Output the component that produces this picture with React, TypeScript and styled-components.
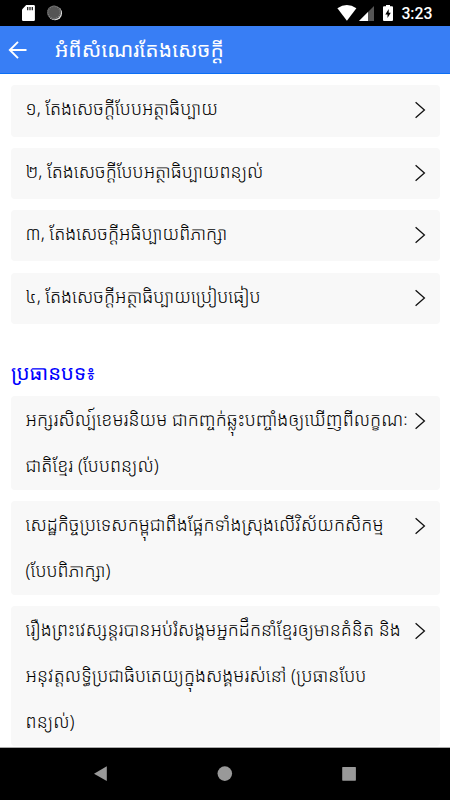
import React from "react";
import styled, { createGlobalStyle } from "styled-components";

const GlobalStyle = createGlobalStyle`
  *, *::before, *::after { box-sizing: border-box; }
  body { margin: 0; background: #fff; font-family: "Noto Sans Khmer", "Noto Sans", sans-serif; }
`;

const Screen = styled.div`
  width: 450px;
  height: 800px;
  display: flex;
  flex-direction: column;
  overflow: hidden;
  background: #fff;
`;

const StatusBar = styled.header`
  flex: none;
  height: 26px;
  display: flex;
  justify-content: space-between;
  background: #000;
`;

const Clock = styled.span`
  margin-right: 17.5px;
  color: #fff;
  font: 500 15.8px/28px Roboto, sans-serif;
`;

const StatusGroup = styled.div`
  display: flex;
`;

const AppBar = styled.div`
  flex: none;
  height: 48px;
  display: flex;
  align-items: center;
  padding-left: 8px;
  background: #387ef5;
  border-bottom: 1px solid #0c6ff5;
`;

const Title = styled.h1`
  margin: 0 0 0 27px;
  color: #fff;
  font-size: 21px;
  font-weight: 420;
  line-height: 44px;
  height: 46px;
  white-space: nowrap;
`;

const Content = styled.main`
  flex: 1;
  min-height: 0;
  overflow: hidden;
  padding: 11.4px 10px 0 11px;
  border-bottom: 1px solid #aaa;
`;

const List = styled.div<{ $gap: number }>`
  display: flex;
  flex-direction: column;
  gap: ${p => p.$gap}px;
`;

const Card = styled.button<{ $height: number }>`
  flex: none;
  width: 100%;
  height: ${p => p.$height}px;
  display: flex;
  justify-content: space-between;
  align-items: flex-start;
  padding: 0 14px 0 14.6px;
  border: 0;
  border-radius: 4px;
  background: #f8f8f8;
  color: #000;
  font-family: inherit;
  text-align: left;
`;

const Lines = styled.span`
  display: flex;
  flex-direction: column;
`;

const Line = styled.span`
  height: 46px;
  font-size: 18px;
  font-weight: 330;
  line-height: 46px;
  white-space: nowrap;
`;

const Chevron = styled.svg`
  flex: none;
  width: 12px;
  height: 18px;
  margin-top: 16px;
`;

const SectionTitle = styled.h2`
  height: 46px;
  margin: 26.4px 0 0;
  color: #00f;
  font-size: 20.2px;
  font-weight: 400;
  line-height: 44px;
`;

const NavBar = styled.nav`
  flex: none;
  height: 52px;
  background: #000;
`;

const lessons = [
  "១, តែងសេចក្ដីបែបអត្ថាធិប្បាយ",
  "២, តែងសេចក្ដីបែបអត្ថាធិប្បាយពន្យល់",
  "៣, តែងសេចក្ដីអធិប្បាយពិភាក្សា",
  "៤, តែងសេចក្ដីអត្ថាធិប្បាយប្រៀបធៀប",
];

const topics = [
  {
    height: 94,
    lines: [
      "អក្សរសិល្ប៍ខេមរនិយម ជាកញ្ចក់ឆ្លុះបញ្ចាំងឲ្យឃើញពីលក្ខណៈ",
      "ជាតិខ្មែរ (បែបពន្យល់)",
    ],
  },
  {
    height: 94,
    lines: [
      "សេដ្ឋកិច្ចប្រទេសកម្ពុជាពឹងផ្អែកទាំងស្រុងលើវិស័យកសិកម្ម",
      "(បែបពិភាក្សា)",
    ],
  },
  {
    height: 140,
    lines: [
      "រឿងព្រះវេស្សន្តរបានអប់រំសង្គមអ្នកដឹកនាំខ្មែរឲ្យមានគំនិត និង",
      "អនុវត្តលទ្ធិប្រជាធិបតេយ្យក្នុងសង្គមរស់នៅ (ប្រធានបែប",
      "ពន្យល់)",
    ],
  },
];

function Item({ height, lines }: { height: number; lines: string[] }) {
  return (
    <Card $height={height}>
      <Lines>
        {lines.map(line => <Line key={line}>{line}</Line>)}
      </Lines>
      <Chevron viewBox="0 0 12 18" fill="none" stroke="#111" strokeWidth="1.3">
        <path d="M1.6 1.2 10.4 9 1.6 16.8" />
      </Chevron>
    </Card>
  );
}

export default function App() {
  return (
    <>
      <GlobalStyle />
      <Screen>
        <StatusBar>
          <StatusGroup>
            <svg width="80" height="26" viewBox="0 0 80 26">
              <path d="M26.2 5h7.5q1.2 0 1.2 1.2v13.5q0 1.2-1.2 1.2H23.2q-1.2 0-1.2-1.2V9.5z" fill="#fff" />
              <path d="M27.7 7v3.2M30 7v3.2M32.3 7v3.2" stroke="#222" strokeWidth="1.3" />
              <circle cx="55" cy="13.2" r="7" fill="#ddd" />
              <circle cx="54" cy="12.4" r="7" fill="#444" />
              <circle cx="54" cy="12.4" r="6.2" fill="#555" stroke="#888" strokeWidth="1.2" strokeDasharray="1 1" />
            </svg>
          </StatusGroup>
          <StatusGroup>
            <svg width="64" height="26" viewBox="338 0 64 26">
              <path d="M338.4 8.2Q347.9 2 357.4 8.2L347.9 20.8z" fill="#fff" />
              <path d="M375 6v15h-15z" fill="#555" />
              <path d="M369 12v9h-9z" fill="#fff" />
              <path d="M385 6.2h2V5h4v1.2h2q1 0 1 1V20q0 1-1 1h-8q-1 0-1-1V7.2q0-1 1-1z" fill="#fff" />
              <path d="M389.7 9l-3.4 5.5h2.2V18l3.3-5.3h-2.1z" fill="#000" />
            </svg>
            <Clock>3:23</Clock>
          </StatusGroup>
        </StatusBar>
        <AppBar>
          <svg width="20" height="20" viewBox="8 40 20 20" fill="none" stroke="#fff" strokeWidth="1.9">
            <path d="M26.5 50H10M18 41.8 9.8 50l8.2 8.2" />
          </svg>
          <Title>អំពីសំណេរតែងសេចក្ដី</Title>
        </AppBar>
        <Content>
          <List $gap={11.2}>
            {lessons.map(text => <Item key={text} height={51.2} lines={[text]} />)}
          </List>
          <SectionTitle>ប្រធានបទ៖</SectionTitle>
          <List $gap={11}>
            {topics.map(t => <Item key={t.lines[0]} {...t} />)}
          </List>
        </Content>
        <NavBar>
          <svg width="450" height="52" viewBox="0 748 450 52" fill="#999">
            <path d="M94 773.7 106.8 766.3v14.8z" />
            <circle cx="224.8" cy="773.6" r="7.3" />
            <rect x="342.2" y="767" width="13.7" height="13.7" rx=".6" />
          </svg>
        </NavBar>
      </Screen>
    </>
  );
}
